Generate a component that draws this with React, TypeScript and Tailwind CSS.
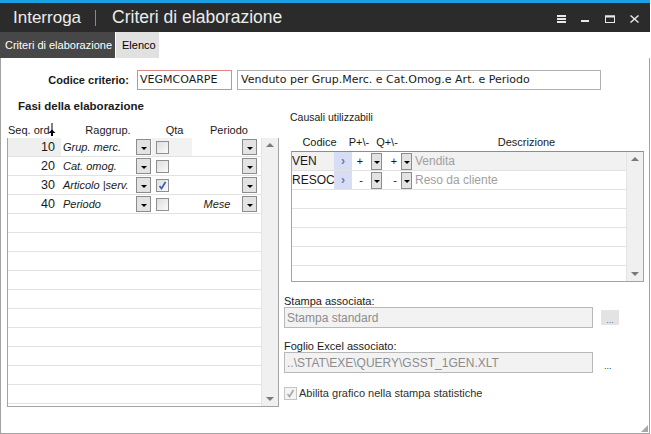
import React from 'react';

type Fase = { seq: string; rag: string; qta: boolean; per: string };

const fasi: Fase[] = [
  { seq: '10', rag: 'Grup. merc.', qta: false, per: '' },
  { seq: '20', rag: 'Cat. omog.', qta: false, per: '' },
  { seq: '30', rag: 'Articolo |serv.', qta: true, per: '' },
  { seq: '40', rag: 'Periodo', qta: false, per: 'Mese' },
];

const causali = [
  { cod: 'VEN', p: '+', q: '+', desc: 'Vendita' },
  { cod: 'RESOC', p: '-', q: '-', desc: 'Reso da cliente' },
];

function Arrow() {
  return <div className="w-0 h-0 border-l-[3px] border-r-[3px] border-t-[3px] border-transparent border-t-black" />;
}

function DropBtn({ wide = true }: { wide?: boolean }) {
  return (
    <div
      className={`${wide ? 'w-[15px] h-[16px]' : 'w-[11px] h-[17px]'} border border-[#8c8c8c] bg-[#e3e3e3] flex items-center justify-center pt-[2px]`}
    >
      <Arrow />
    </div>
  );
}

function Check({ checked, disabled }: { checked?: boolean; disabled?: boolean }) {
  return (
    <div
      className={`w-[13px] h-[13px] border ${disabled ? 'border-[#c4c4c4] bg-[#f4f4f4]' : 'border-[#8f8f8f] bg-gradient-to-br from-[#dedede] to-[#fafafa]'} flex items-center justify-center`}
    >
      {checked && (
        <svg width="9" height="9" viewBox="0 0 9 9">
          <path d="M1.5 5 L3.5 7.5 L7.5 1" fill="none" stroke={disabled ? '#a8a8a8' : '#3b5cb5'} strokeWidth="1.6" />
        </svg>
      )}
    </div>
  );
}

function ScrollBar({ h }: { h: string }) {
  return (
    <div className={`w-[17px] ${h} bg-[#f0f0f0] border-l border-[#e4e4e4] flex flex-col items-center justify-between py-[5px]`}>
      <div className="w-0 h-0 border-l-[4px] border-r-[4px] border-b-[4px] border-transparent border-b-[#7a7a7a]" />
      <div className="w-0 h-0 border-l-[4px] border-r-[4px] border-t-[4px] border-transparent border-t-[#7a7a7a]" />
    </div>
  );
}

export default function App() {
  const emptyLeft = Array.from({ length: 10 });
  const emptyRight = Array.from({ length: 4 });

  return (
    <div className="w-[651px] h-[434px] bg-white overflow-hidden font-['Liberation_Sans',Arial,sans-serif] text-[#1a1a1a]">
      <div className="w-[650px] h-[434px] flex flex-col">
        {/* Title bar */}
        <div className="h-[32px] border-t-[3px] border-[#1ba1e2] bg-[#2b2b2b] flex items-center text-[#ececec] pr-[10px]">
          <span className="ml-[13px] text-[17px] leading-none">Interroga</span>
          <span className="ml-[14px] w-px h-[16px] bg-[#8a8a8a]" />
          <span className="ml-[16px] text-[17.5px] leading-none">Criteri di elaborazione</span>
          <div className="ml-auto flex items-center gap-[15px] mt-[3px] mr-[1px]">
            <svg width="9" height="8" viewBox="0 0 9 8">
              <rect x="0" y="0" width="9" height="2" fill="#e8e8e8" />
              <rect x="0" y="3" width="9" height="2" fill="#e8e8e8" />
              <rect x="0" y="6" width="9" height="2" fill="#e8e8e8" />
            </svg>
            <svg width="9" height="8" viewBox="0 0 9 8">
              <rect x="0" y="5" width="8" height="2" fill="#e8e8e8" />
            </svg>
            <svg width="10" height="8" viewBox="0 0 10 8">
              <rect x="0.5" y="1" width="9" height="6.5" fill="none" stroke="#e8e8e8" strokeWidth="1" />
              <rect x="0" y="0.5" width="10" height="2" fill="#e8e8e8" />
            </svg>
            <svg width="9" height="8" viewBox="0 0 9 8">
              <path d="M0.5 0.5 L8.5 7.5 M8.5 0.5 L0.5 7.5" stroke="#e8e8e8" strokeWidth="1.4" />
            </svg>
          </div>
        </div>

        {/* Tabs */}
        <div className="h-[26px] flex text-[11px]">
          <div className="w-[115px] bg-[#474747] text-white flex items-center pl-[5px]">Criteri di elaborazione</div>
          <div className="ml-px w-[43px] bg-[#e1e1e1] text-black flex items-center pl-[6px]">Elenco</div>
        </div>

        {/* Body */}
        <div className="flex-1 border-x border-b border-[#a3a3a3] relative">
          {/* Codice criterio */}
          <div className="mt-[12px] h-[20px] flex items-center">
            <div className="w-[128px] text-right text-[11px] font-bold">Codice criterio:</div>
            <div className="ml-[8px] w-[95px] h-[20px] border border-[#e08686] flex items-center pl-[2px] text-[11px] font-['DejaVu_Sans',sans-serif]">
              VEGMCOARPE
            </div>
            <div className="ml-[5px] w-[364px] h-[20px] border border-[#b0b0b0] flex items-center pl-[3px] text-[11px] font-['DejaVu_Sans',sans-serif]">
              Venduto per Grup.Merc. e Cat.Omog.e Art. e Periodo
            </div>
          </div>

          <div className="flex mt-[9px]">
            {/* Left column */}
            <div className="ml-[6px] w-[272px]">
              <div className="pl-[11px] h-[14px] text-[11.5px] font-bold leading-[14px]">Fasi della elaborazione</div>
              <div className="mt-[10px] h-[14px] flex text-[11px] leading-[14px] relative">
                <div className="w-[53px] pl-px">Seq. ord</div>
                <div className="w-[92px] text-center pl-[4px]">Raggrup.</div>
                <div className="w-[45px] text-center">Qta</div>
                <div className="w-[64px] text-center">Periodo</div>
                <svg className="absolute left-[41px] top-[0px]" width="8" height="14" viewBox="0 0 8 14">
                  <path d="M4 0 V9" stroke="#000" strokeWidth="1" />
                  <path d="M0.5 10 L4 6.5 L7.5 10 Z" fill="#000" />
                  <path d="M3 10 H5 V13 H3 Z" fill="#000" />
                </svg>
              </div>
              <div className="mt-px h-[269px] border-l border-r border-b border-[#a3a3a3] flex">
                <div className="flex-1">
                  {fasi.map((f, i) => (
                    <div key={f.seq} className="h-[19px] flex items-center border-b border-[#e2e2e2]">
                      <div className={`w-[53px] h-full flex items-center justify-end pr-[6px] text-[12.5px] ${i === 0 ? 'bg-[#efefef]' : ''}`}>
                        {f.seq}
                      </div>
                      <div className="w-[75px] pl-[2px] italic text-[11px]">{f.rag}</div>
                      <DropBtn />
                      <div className={`ml-px w-[40px] h-full flex items-center pl-[4px] ${i === 0 ? 'bg-[#f2f2f2]' : ''}`}>
                        <Check checked={f.qta} />
                      </div>
                      <div className="w-[50px] text-center italic text-[11px]">{f.per}</div>
                      <DropBtn />
                    </div>
                  ))}
                  {emptyLeft.map((_, i) => (
                    <div key={i} className="h-[19px] border-b border-[#e2e2e2]" />
                  ))}
                </div>
                <ScrollBar h="h-full" />
              </div>
            </div>

            {/* Right column */}
            <div className="ml-[5px] w-[360px]">
              <div className="pt-[12px] pl-[6px] h-[24px] text-[10.5px] leading-[12px]">Causali utilizzabili</div>
              <div className="mt-[13px] h-[13px] flex text-[11px] leading-[13px]">
                <div className="w-[61px] text-center pl-[10px]">Codice</div>
                <div className="w-[28px] text-center">P+\-</div>
                <div className="w-[28px] text-center">Q+\-</div>
                <div className="flex-1 text-center pl-[8px]">Descrizione</div>
              </div>
              <div className="mt-[2px] ml-[7px] w-[353px] h-[131px] border-t border-t-[#3ea6dc] border-x border-b border-[#a3a3a3] flex">
                <div className="flex-1">
                  {causali.map((c, i) => (
                    <div key={c.cod} className={`h-[19px] flex border-b border-[#e2e2e2] ${i === 0 ? 'bg-[#f1f1f1]' : ''}`}>
                      <div className="w-[42px] flex items-center text-[12px]">{c.cod}</div>
                      <div className="w-[18px] bg-[#d7ddf4] flex items-center justify-center text-[12px] font-bold text-[#6b78a8] pb-[1px]">›</div>
                      <div className="w-[30px] flex items-center justify-end bg-white">
                        <span className={`mr-[8px] text-[11px] ${c.p === '+' ? 'italic' : ''}`}>{c.p}</span>
                        <DropBtn wide={false} />
                      </div>
                      <div className="w-[30px] flex items-center justify-end bg-white">
                        <span className={`mr-[4px] text-[11px] ${c.q === '+' ? 'italic' : ''}`}>{c.q}</span>
                        <DropBtn wide={false} />
                      </div>
                      <div className="flex-1 pl-[3px] flex items-center text-[12px] text-[#a0a0a0]">{c.desc}</div>
                    </div>
                  ))}
                  {emptyRight.map((_, i) => (
                    <div key={i} className="h-[19px] border-b border-[#e2e2e2]" />
                  ))}
                </div>
                <ScrollBar h="h-full" />
              </div>

              <div className="mt-[13px] text-[11px] leading-[12px]">Stampa associata:</div>
              <div className="flex items-center">
                <div className="w-[309px] h-[21px] border border-[#b8b8b8] bg-[#f2f2f2] flex items-center pl-[2px] text-[12px] text-[#8c8c8c]">
                  Stampa standard
                </div>
                <div className="ml-[8px] w-[18px] h-[15px] bg-[#e3e3e3] flex items-end justify-center text-[9px] leading-[10px] text-[#707070]">...</div>
              </div>

              <div className="mt-[12px] text-[11px] leading-[12px]">Foglio Excel associato:</div>
              <div className="flex items-center">
                <div className="w-[309px] h-[21px] border border-[#b8b8b8] bg-[#f2f2f2] flex items-center pl-[2px] text-[12px] text-[#8c8c8c]">
                  ..\STAT\EXE\QUERY\GSST_1GEN.XLT
                </div>
                <div className="ml-[11px] text-[9px] leading-[10px] mt-[6px] text-[#303030]">...</div>
              </div>

              <div className="mt-[12px] flex items-center gap-[2px]">
                <Check checked disabled />
                <span className="text-[11px] text-[#303030]">Abilita grafico nella stampa statistiche</span>
              </div>
            </div>
          </div>

          {/* resize grip */}
          <svg className="absolute right-[1px] bottom-[1px]" width="7" height="7" viewBox="0 0 7 7">
            <path d="M7 0 L7 7 L0 7 Z" fill="#a8a8a8" />
          </svg>
        </div>
      </div>
    </div>
  );
}
